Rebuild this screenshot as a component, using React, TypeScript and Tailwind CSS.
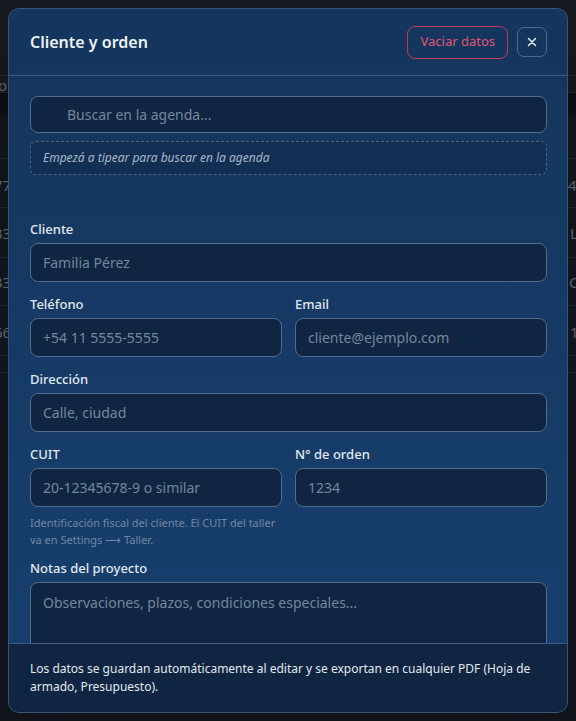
import React from 'react';

const rowLines = [75, 92, 158, 207, 257, 305, 355, 372];

const Background: React.FC = () => (
  <div className="absolute inset-0 bg-[#1c212a] text-[15px] text-[#8a93a3]">
    <div className="h-[92px] bg-[#20252e]" />
    <div className="h-[23px] bg-[#15181e]" />
    {rowLines.map((y) => (
      <div key={y} className="absolute left-0 right-0 h-px bg-[#323946]" style={{ top: y }} />
    ))}
    <span className="absolute left-[-2px] top-[74px]">o</span>
    <span className="absolute left-[-6px] top-[174px]">77</span>
    <span className="absolute left-[-6px] top-[222px]">33</span>
    <span className="absolute left-[-6px] top-[271px]">33</span>
    <span className="absolute left-[-6px] top-[321px]">66</span>
    <span className="absolute left-[568px] top-[174px]">45</span>
    <span className="absolute left-[570px] top-[222px]">L</span>
    <span className="absolute left-[569px] top-[271px]">C</span>
    <span className="absolute left-[570px] top-[321px]">1</span>
  </div>
);

const inputCls =
  'block w-full rounded-[8px] border border-[#536c8d] bg-[#0f2541] px-[12px] text-[14px] text-[#e3e9f1] placeholder:text-[#75869c] outline-none';

const Field: React.FC<{ label: string; placeholder: string }> = ({ label, placeholder }) => (
  <label className="block">
    <span className="block text-[13px] font-medium leading-[18px] text-[#e2e8f0]">{label}</span>
    <input className={`${inputCls} mt-[5px] h-[39px]`} placeholder={placeholder} />
  </label>
);

export default function App() {
  return (
    <div className="relative h-[721px] w-full overflow-hidden font-['Noto_Sans',sans-serif]">
      <Background />
      <div className="absolute inset-0 bg-black/30" />
      <div className="absolute inset-0 flex justify-center pt-2">
        <div className="flex h-[705px] w-[560px] flex-col overflow-hidden rounded-[11px] border border-[#3a5275] bg-gradient-to-b from-[#14355d] to-[#17406f] shadow-2xl">
          <div className="flex h-[67px] shrink-0 items-center justify-between border-b border-[#3f5a7e] pl-[21px] pr-[20px]">
            <h2 className="text-[16px] font-semibold text-[#eef2f7]">Cliente y orden</h2>
            <div className="flex items-center gap-[9px]">
              <button className="h-[33px] rounded-[8px] border border-[#c23a52] px-[12px] text-[13px] text-[#e2566c]">
                Vaciar datos
              </button>
              <button className="flex h-[30px] w-[30px] items-center justify-center rounded-[7px] border border-[#52698a] text-[#e6ecf3]">
                <svg width="10" height="10" viewBox="0 0 10 10" fill="none" stroke="currentColor" strokeWidth="1.5" strokeLinecap="round">
                  <path d="M1.5 1.5l7 7M8.5 1.5l-7 7" />
                </svg>
              </button>
            </div>
          </div>

          <div className="flex-1 overflow-hidden pl-[21px] pr-[20px] pt-5">
            <input className={`${inputCls} h-[37px] pl-[36px]`} placeholder="Buscar en la agenda..." />
            <div className="mt-2 flex h-[34px] items-center rounded-[6px] border border-dashed border-[#4a6488] bg-[#122e52] px-3 text-[12px] italic text-[#a9b7c9]">
              Empezá a tipear para buscar en la agenda
            </div>

            <div className="mt-[45px] flex flex-col gap-[13px]">
              <Field label="Cliente" placeholder="Familia Pérez" />
              <div className="grid grid-cols-2 gap-[13px]">
                <Field label="Teléfono" placeholder="+54 11 5555-5555" />
                <Field label="Email" placeholder="cliente@ejemplo.com" />
              </div>
              <Field label="Dirección" placeholder="Calle, ciudad" />
              <div>
                <div className="grid grid-cols-2 gap-[13px]">
                  <Field label="CUIT" placeholder="20-12345678-9 o similar" />
                  <Field label="N° de orden" placeholder="1234" />
                </div>
                <p className="mt-[7px] w-[250px] text-[11px] leading-[17px] text-[#6f86a3]">
                  Identificación fiscal del cliente. El CUIT del taller va en Settings ⟶ Taller.
                </p>
              </div>
              <label className="-mt-[2px] block">
                <span className="block text-[13px] font-medium leading-[18px] text-[#e2e8f0]">Notas del proyecto</span>
                <textarea
                  className={`${inputCls} mt-[5px] h-[90px] resize-none py-[9px]`}
                  placeholder="Observaciones, plazos, condiciones especiales..."
                />
              </label>
            </div>
          </div>

          <div className="shrink-0 border-t border-[#3f5a7e] bg-[#0f2541] pl-[21px] pr-[20px] py-4 text-[12px] leading-[18px] text-[#e2e8f0]">
            Los datos se guardan automáticamente al editar y se exportan en cualquier PDF (Hoja de armado, Presupuesto).
          </div>
        </div>
      </div>
    </div>
  );
}
